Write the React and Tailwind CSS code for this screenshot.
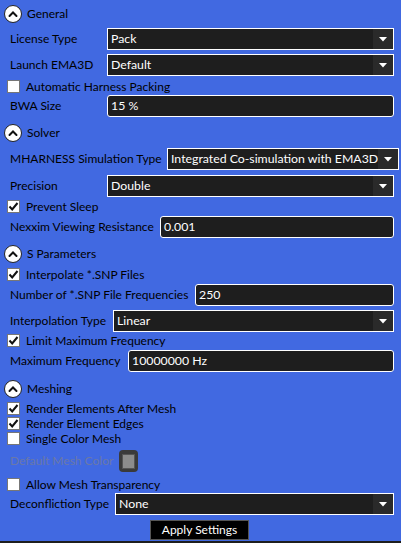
import React from 'react';

const font = { fontFamily: 'Lato, "Noto Sans", sans-serif' };

function Chevron() {
  return (
    <div className="w-[18px] h-[18px] rounded-full bg-white border-[1.5px] border-[#222] flex items-center justify-center shrink-0">
      <svg width="10" height="8" viewBox="0 0 10 8">
        <path d="M1.5 6 L5 2.5 L8.5 6" fill="none" stroke="#111" strokeWidth="2" strokeLinecap="round" />
      </svg>
    </div>
  );
}

function Header({ title, mt }) {
  return (
    <div className={`flex items-center h-[20px] pl-[4px] gap-[5px] ${mt}`}>
      <Chevron />
      <span className="text-[12px] leading-[16px] text-black">{title}</span>
    </div>
  );
}

function Check({ label, checked, mt = '', h = 'h-[18px]' }) {
  return (
    <div className={`flex items-center pl-[7px] gap-[6px] ${h} ${mt}`}>
      <div className="w-[13px] h-[13px] bg-white border border-[#777] flex items-center justify-center shrink-0">
        {checked && (
          <svg width="11" height="11" viewBox="0 0 11 11">
            <path d="M1.5 5.5 L4.2 8.5 L9.5 2" fill="none" stroke="#111" strokeWidth="2" />
          </svg>
        )}
      </div>
      <span className="text-[12px] leading-[15px] text-black whitespace-nowrap">{label}</span>
    </div>
  );
}

function Combo({ label, value, lw, mt = '' }) {
  return (
    <div className={`flex items-center h-[22px] pl-[10px] pr-[7px] ${mt}`}>
      <span className={`text-[12px] leading-[16px] text-black whitespace-nowrap shrink-0 ${lw}`}>{label}</span>
      <div className="flex-1 h-full border border-white bg-[#1e1e1e] flex items-stretch">
        <span className="flex-1 text-[12.3px] text-white pl-[3px] leading-[20px] whitespace-nowrap overflow-hidden">{value}</span>
        <div className="w-[20px] bg-[#2a2a2a] flex items-center justify-center">
          <svg width="8" height="5" viewBox="0 0 8 5">
            <path d="M0 0 H8 L4 4.5 Z" fill="#fff" />
          </svg>
        </div>
      </div>
    </div>
  );
}

function Text({ label, value, lw, mt = '' }) {
  return (
    <div className={`flex items-center h-[22px] pl-[10px] pr-[7px] ${mt}`}>
      <span className={`text-[12px] leading-[16px] text-black whitespace-nowrap shrink-0 ${lw}`}>{label}</span>
      <div className="flex-1 h-full border border-white rounded-[3px] bg-[#1e1e1e]">
        <span className="block text-[12.3px] text-white pl-[3px] leading-[20px]">{value}</span>
      </div>
    </div>
  );
}

export default function App() {
  return (
    <div className="w-[401px] h-[543px] bg-[#4169e1] flex flex-col overflow-hidden" style={font}>
      {/* General */}
      <Header title="General" mt="mt-[4px]" />
      <Combo label="License Type" value="Pack" lw="w-[97px]" mt="mt-[4px]" />
      <Combo label="Launch EMA3D" value="Default" lw="w-[97px]" mt="mt-[4px]" />
      <Check label="Automatic Harness Packing" mt="mt-[1px]" />
      <Text label="BWA Size" value="15 %" lw="w-[97px]" />

      {/* Solver */}
      <Header title="Solver" mt="mt-[6px]" />
      <Combo label="MHARNESS Simulation Type" value="Integrated Co-simulation with EMA3D" lw="w-[157px]" mt="mt-[5px]" />
      <Combo label="Precision" value="Double" lw="w-[97px]" mt="mt-[5px]" />
      <Check label="Prevent Sleep" checked />
      <Text label="Nexxim Viewing Resistance" value="0.001" lw="w-[150px]" mt="mt-[1px]" />

      {/* S Parameters */}
      <Header title="S Parameters" mt="mt-[6px]" />
      <Check label="Interpolate *.SNP Files" checked mt="mt-[1px]" />
      <Text label="Number of *.SNP File Frequencies" value="250" lw="w-[185px]" mt="mt-[1px]" />
      <Combo label="Interpolation Type" value="Linear" lw="w-[103px]" mt="mt-[4px]" />
      <Check label="Limit Maximum Frequency" checked h="h-[17px]" />
      <Text label="Maximum Frequency" value="10000000 Hz" lw="w-[118px]" mt="mt-[1px]" />

      {/* Meshing */}
      <Header title="Meshing" mt="mt-[7px]" />
      <Check label="Render Elements After Mesh" checked h="h-[15px]" mt="mt-[2px]" />
      <Check label="Render Element Edges" checked h="h-[15px]" />
      <Check label="Single Color Mesh" h="h-[15px]" />
      <div className="flex items-center h-[22px] pl-[10px] mt-[4px] gap-[7px]">
        <span className="text-[12px] leading-[16px] text-[#6a78a8] w-[102px] whitespace-nowrap">Default Mesh Color</span>
        <div className="w-[19px] h-[22px] rounded-[4px] bg-[#3a3a3a] p-[3px] flex items-center justify-center">
          <div className="w-[13px] h-[15px] bg-[#8c8c8c] border border-[#555]" />
        </div>
      </div>
      <Check label="Allow Mesh Transparency" mt="mt-[3px]" />
      <Combo label="Deconfliction Type" value="None" lw="w-[105px]" />

      <div className="flex justify-center mt-[5px] pr-[2px]">
        <button className="w-[99px] h-[20px] bg-black border border-[#555] text-white text-[12px] leading-[18px]">
          Apply Settings
        </button>
      </div>
      <div className="flex-1" />
      <div className="h-[2px] bg-[#1e1e1e]" />
    </div>
  );
}
